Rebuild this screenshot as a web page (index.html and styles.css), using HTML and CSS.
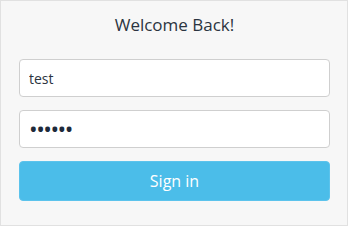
FILE: index.html
```html
<!DOCTYPE html>
<html lang="en">
<head>
    <meta charset="UTF-8">
    <meta name="viewport" content="width=device-width, initial-scale=1.0">
    <title>Sign in</title>
    <link rel="stylesheet" href="styles.css">
</head>
<body>
    <div class="login-box">
        <h1>Welcome Back!</h1>
        <form class="login-form" onsubmit="return false;">
            <input type="text" value="test">
            <input type="password" class="password" value="secret">
            <button type="submit" class="signin-btn">Sign in</button>
        </form>
    </div>
</body>
</html>
```

FILE: styles.css
```css
* {
    box-sizing: border-box;
}

body {
    font-family: "Open Sans", Arial, sans-serif;
    margin: 0;
    padding: 0;
}

.login-box {
    width: 348px;
    height: 226px;
    background-color: #f7f7f7;
    border: 1px solid #e1e1e1;
    padding: 11px 17px 0 18px;
}

h1 {
    text-align: center;
    font-size: 17px;
    font-weight: 400;
    color: #2b3440;
    margin: 0 0 21px 0;
    line-height: 26px;
}

.login-form {
    display: flex;
    flex-direction: column;
    gap: 13px;
}

.login-form input {
    height: 38px;
    width: 100%;
    border: 1px solid #cfcfcf;
    border-radius: 4px;
    background-color: #fff;
    padding: 0 9px;
    font-family: "Open Sans", Arial, sans-serif;
    font-size: 14px;
    color: #2b3440;
    outline: none;
}

.login-form .password {
    font-size: 23px;
    letter-spacing: -1.5px;
    color: #1e2a3a;
}

.signin-btn {
    height: 40px;
    width: 100%;
    border: 1px solid #5cc3ec;
    border-radius: 4px;
    background-color: #4bbde9;
    color: #fff;
    font-family: "Open Sans", Arial, sans-serif;
    font-size: 16px;
    cursor: pointer;
}
```
